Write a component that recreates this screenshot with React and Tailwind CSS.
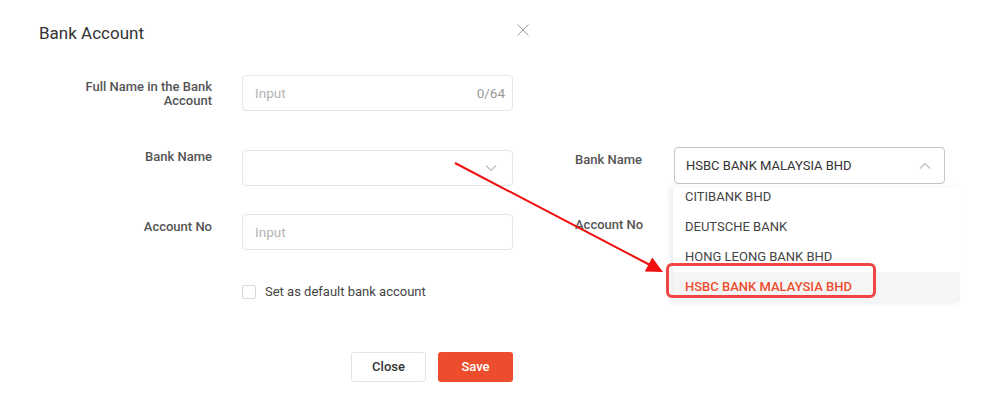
import React from "react";

const Chevron = ({ up = false, className = "" }) => (
  <svg width="12" height="7" viewBox="0 0 12 7" className={className}>
    <path
      d={up ? "M1 6.5L6 1.5L11 6.5" : "M1 0.5L6 5.5L11 0.5"}
      fill="none"
      stroke="currentColor"
      strokeWidth="1.2"
    />
  </svg>
);

const Label = ({ children, className = "" }) => (
  <div className={`text-right text-[13px] font-medium leading-[14px] text-[#555] ${className}`}>{children}</div>
);

const banks = ["CITIBANK BHD", "DEUTSCHE BANK", "HONG LEONG BANK BHD"];

export default function App() {
  return (
    <div
      className="relative flex w-[994px] h-[402px] bg-white overflow-hidden"
      style={{ fontFamily: "Roboto, 'Liberation Sans', sans-serif" }}
    >
      {/* modal */}
      <div className="w-[560px] shrink-0 pl-[39px] pt-[23px]">
        <div className="flex w-[490px] items-start justify-between">
          <h2 className="text-[17px] leading-[20px] text-[#333]">Bank Account</h2>
          <svg width="12" height="12" viewBox="0 0 12 12" className="mt-[1px] text-[#9a9a9a]">
            <path d="M0.5 0.5L11.5 11.5M11.5 0.5L0.5 11.5" stroke="currentColor" strokeWidth="1" />
          </svg>
        </div>

        <div className="mt-[32px] grid grid-cols-[173px_271px] gap-x-[30px]">
          <Label className="pt-[5px] text-[13.5px]">
            Full Name in the Bank
            <br />
            Account
          </Label>
          <div className="flex h-[36px] items-center justify-between rounded-[4px] border border-[#e5e5e5] pl-[12px] pr-[7px] text-[13.5px]">
            <span className="text-[#b3b3b3]">Input</span>
            <span className="text-[#999]">0/64</span>
          </div>

          <Label className="mt-[39px]">Bank Name</Label>
          <div className="mt-[39px] flex h-[36px] items-center justify-end rounded-[4px] border border-[#e5e5e5] pr-[15px] text-[#bdbdbd]">
            <Chevron />
          </div>

          <Label className="mt-[28px] pt-[6px]">Account No</Label>
          <div className="mt-[28px] flex h-[36px] items-center rounded-[4px] border border-[#e5e5e5] pl-[12px] text-[13.5px] text-[#b3b3b3]">
            Input
          </div>

          <div />
          <label className="mt-[35px] flex items-center gap-[9px] text-[13px] leading-[14px] text-[#444]">
            <span className="h-[14px] w-[14px] rounded-[2px] border border-[#d9d9d9]" />
            Set as default bank account
          </label>
        </div>

        <div className="mt-[53px] flex w-[474px] justify-end gap-[12px]">
          <button className="h-[30px] w-[75px] rounded-[3px] border border-[#e3e3e3] bg-white text-[13px] font-medium text-[#333]">
            Close
          </button>
          <button className="h-[30px] w-[75px] rounded-[3px] bg-[#ee4d2d] text-[13px] font-medium text-white">
            Save
          </button>
        </div>
      </div>

      {/* dropdown snippet */}
      <div className="pl-[15px] pt-[147px]">
        <div className="flex">
          <div className="w-[99px] pt-[5px] text-[13px] font-medium leading-[16px] text-[#555]">Bank Name</div>
          <div className="flex h-[37px] w-[271px] items-center justify-between rounded-[4px] border border-[#c4c4c4] pl-[11px] pr-[13px] text-[13px] text-[#333]">
            <span>HSBC BANK MALAYSIA BHD</span>
            <Chevron up className="text-[#bdbdbd]" />
          </div>
        </div>
        <div className="mt-[3px] flex">
          <div className="w-[98px] pt-[30px] text-[13px] font-medium leading-[16px] text-[#555]">Account No</div>
          <div className="h-[115px] w-[287px] overflow-hidden bg-white shadow-[-3px_1px_6px_rgba(0,0,0,0.08)]">
            <div className="-mt-[5px]">
              {banks.map((b) => (
                <div key={b} className="flex h-[30px] items-center pl-[12px] text-[13px] text-[#444]">
                  {b}
                </div>
              ))}
              <div className="flex h-[30px] items-center bg-[#f5f5f5] pl-[12px] text-[13px] font-medium text-[#ee4d2d]">
                HSBC BANK MALAYSIA BHD
              </div>
            </div>
          </div>
        </div>
      </div>

      {/* annotation */}
      <div className="pointer-events-none absolute left-[666px] top-[263px] h-[35px] w-[210px] rounded-[6px] border-[3px] border-[#f04545]" />
      <svg className="pointer-events-none absolute left-0 top-0" width="994" height="402">
        <line x1="455" y1="163" x2="650" y2="265" stroke="#f01010" strokeWidth="2" />
        <polygon points="663,272 644.8,271.6 652.2,257.4" fill="#f01010" />
      </svg>
    </div>
  );
}
